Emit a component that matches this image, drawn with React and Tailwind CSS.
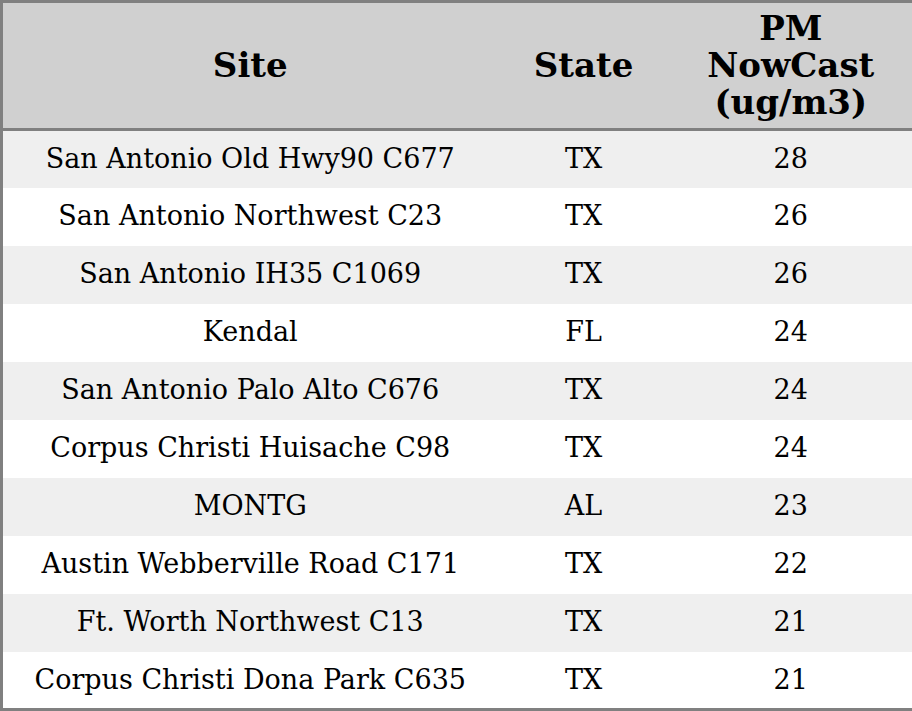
import React from 'react';

const rows = [
  { site: 'San Antonio Old Hwy90 C677', state: 'TX', pm: 28 },
  { site: 'San Antonio Northwest C23', state: 'TX', pm: 26 },
  { site: 'San Antonio IH35 C1069', state: 'TX', pm: 26 },
  { site: 'Kendal', state: 'FL', pm: 24 },
  { site: 'San Antonio Palo Alto C676', state: 'TX', pm: 24 },
  { site: 'Corpus Christi Huisache C98', state: 'TX', pm: 24 },
  { site: 'MONTG', state: 'AL', pm: 23 },
  { site: 'Austin Webberville Road C171', state: 'TX', pm: 22 },
  { site: 'Ft. Worth Northwest C13', state: 'TX', pm: 21 },
  { site: 'Corpus Christi Dona Park C635', state: 'TX', pm: 21 },
];

const App = () => {
  return (
    <div className="w-[912px] h-[711px] bg-white font-['DejaVu_Serif',serif] text-black">
      <table className="w-[912px] h-[711px] border-collapse border-[3px] border-[#808080] table-fixed">
        <colgroup>
          <col className="w-[496px]" />
          <col className="w-[172px]" />
          <col className="w-[244px]" />
        </colgroup>
        <thead>
          <tr className="h-[128px] bg-[#d0d0d0] border-b-[3px] border-[#808080]">
            <th className="text-[34px] font-bold leading-[37px] text-center">Site</th>
            <th className="text-[34px] font-bold leading-[37px] text-center">State</th>
            <th className="text-[34px] font-bold leading-[37px] text-center">
              PM
              <br />
              NowCast
              <br />
              (ug/m3)
            </th>
          </tr>
        </thead>
        <tbody>
          {rows.map((row, i) => (
            <tr key={i} className={i % 2 === 0 ? 'bg-[#efefef] h-[57.7px]' : 'bg-white h-[57.7px]'}>
              <td className="text-[27px] text-center">{row.site}</td>
              <td className="text-[27px] text-center">{row.state}</td>
              <td className="text-[27px] text-center">{row.pm}</td>
            </tr>
          ))}
        </tbody>
      </table>
    </div>
  );
};

export default App;
